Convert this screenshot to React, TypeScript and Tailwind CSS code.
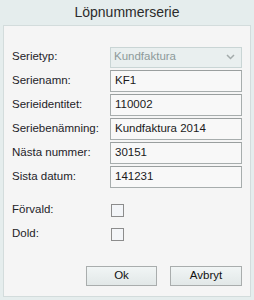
import React from "react";

const font = { fontFamily: '"Liberation Sans", Arial, sans-serif' };

function TextRow({ label, value }: { label: string; value: string }) {
  return (
    <div className="flex h-[22px] items-center">
      <div className="w-[98px] text-[11.5px] text-[#1e2328]">{label}</div>
      <div className="flex h-[22px] w-[132px] items-center border border-[#a7adad] border-t-[#9a9f9f] bg-[#f8f8f8] pl-[4px] text-[11.5px] text-[#1a1a1a]">
        {value}
      </div>
    </div>
  );
}

function CheckRow({ label }: { label: string }) {
  return (
    <div className="flex h-[24px] items-center">
      <div className="w-[99px] text-[11.5px] text-[#1e2328]">{label}</div>
      <div className="h-[13px] w-[13px] border border-[#8c8c8c] bg-[#f3f5f8]" />
    </div>
  );
}

export default function App() {
  return (
    <div className="flex h-[300px] w-[254px] flex-col bg-[#e5eded]" style={font}>
      <div className="flex h-[25px] items-center justify-center text-[14px] text-[#2b2b2b]">
        Löpnummerserie
      </div>
      <div className="mx-[3px] mb-[3px] flex flex-1 flex-col border border-[#d3dcdc] bg-[#f5f5f5] px-2 pt-[20px]">
        <div className="flex flex-col gap-[2px]">
          <div className="flex h-[22px] items-center">
            <div className="w-[98px] text-[11.5px] text-[#1e2328]">Serietyp:</div>
            <div className="flex h-[21px] w-[132px] items-center justify-between border border-[#c9d5d5] bg-[#e9efef] pl-[3px] pr-[6px] text-[11.5px] text-[#8d9a9a]">
              <span>Kundfaktura</span>
              <svg width="9" height="6" viewBox="0 0 9 6">
                <path d="M1 1 L4.5 4.5 L8 1" fill="none" stroke="#a3abab" strokeWidth="1.5" />
              </svg>
            </div>
          </div>
          <TextRow label="Serienamn:" value="KF1" />
          <TextRow label="Serieidentitet:" value="110002" />
          <TextRow label="Seriebenämning:" value="Kundfaktura 2014" />
          <TextRow label="Nästa nummer:" value="30151" />
          <TextRow label="Sista datum:" value="141231" />
        </div>
        <div className="mt-[10px] flex flex-col">
          <CheckRow label="Förvald:" />
          <CheckRow label="Dold:" />
        </div>
        <div className="mt-[20px] flex justify-end gap-[13px]">
          <button className="h-[20px] w-[71px] border border-[#a9adad] bg-gradient-to-b from-[#f1f5f5] to-[#e2e8e8] text-[11.5px] text-[#111]">
            Ok
          </button>
          <button className="h-[20px] w-[72px] border border-[#a9adad] bg-gradient-to-b from-[#f1f5f5] to-[#e2e8e8] text-[11.5px] text-[#111]">
            Avbryt
          </button>
        </div>
      </div>
    </div>
  );
}
